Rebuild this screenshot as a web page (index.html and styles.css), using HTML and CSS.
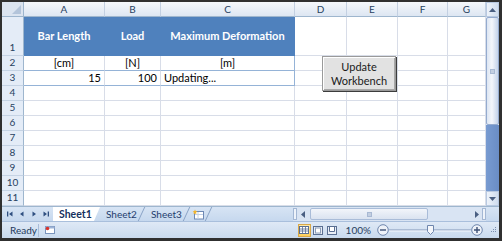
FILE: index.html
```html
<!DOCTYPE html>
<html lang="en">
<head>
    <meta charset="UTF-8">
    <title>Bar Length - Workbench</title>
    <link rel="stylesheet" href="styles.css">
</head>
<body>
    <div class="window">
        <div class="sheet-area">
            <div class="grid">
                <div class="cell hd corner"><span class="corner-tri"></span></div>
                <div class="cell hd">A</div>
                <div class="cell hd">B</div>
                <div class="cell hd">C</div>
                <div class="cell hd">D</div>
                <div class="cell hd">E</div>
                <div class="cell hd">F</div>
                <div class="cell hd">G</div>

                <div class="cell rn">1</div>
                <div class="cell title">Bar Length</div>
                <div class="cell title">Load</div>
                <div class="cell title">Maximum Deformation</div>
                <div class="cell"></div><div class="cell"></div><div class="cell"></div><div class="cell"></div>

                <div class="cell rn">2</div>
                <div class="cell unit tb">[cm]</div>
                <div class="cell unit tb">[N]</div>
                <div class="cell unit tb tr">[m]</div>
                <div class="cell"></div><div class="cell"></div><div class="cell"></div><div class="cell"></div>

                <div class="cell rn">3</div>
                <div class="cell num tb">15</div>
                <div class="cell num tb">100</div>
                <div class="cell txt tb tr">Updating...</div>
                <div class="cell"></div><div class="cell"></div><div class="cell"></div><div class="cell"></div>

                <div class="cell rn">4</div><div class="cell"></div><div class="cell"></div><div class="cell"></div><div class="cell"></div><div class="cell"></div><div class="cell"></div><div class="cell"></div>
                <div class="cell rn">5</div><div class="cell"></div><div class="cell"></div><div class="cell"></div><div class="cell"></div><div class="cell"></div><div class="cell"></div><div class="cell"></div>
                <div class="cell rn">6</div><div class="cell"></div><div class="cell"></div><div class="cell"></div><div class="cell"></div><div class="cell"></div><div class="cell"></div><div class="cell"></div>
                <div class="cell rn">7</div><div class="cell"></div><div class="cell"></div><div class="cell"></div><div class="cell"></div><div class="cell"></div><div class="cell"></div><div class="cell"></div>
                <div class="cell rn">8</div><div class="cell"></div><div class="cell"></div><div class="cell"></div><div class="cell"></div><div class="cell"></div><div class="cell"></div><div class="cell"></div>
                <div class="cell rn">9</div><div class="cell"></div><div class="cell"></div><div class="cell"></div><div class="cell"></div><div class="cell"></div><div class="cell"></div><div class="cell"></div>
                <div class="cell rn">10</div><div class="cell"></div><div class="cell"></div><div class="cell"></div><div class="cell"></div><div class="cell"></div><div class="cell"></div><div class="cell"></div>
                <div class="cell rn">11</div><div class="cell"></div><div class="cell"></div><div class="cell"></div><div class="cell"></div><div class="cell"></div><div class="cell"></div><div class="cell"></div>
            </div>

            <div class="vscroll">
                <div class="vs-btn">
                    <svg width="7" height="4" viewBox="0 0 7 4"><path d="M0 4L3.5 0 7 4z" fill="#4a5f82"/></svg>
                </div>
                <div class="vs-thumb"><span class="grip-h"></span></div>
                <div class="vs-track"></div>
                <div class="vs-btn">
                    <svg width="7" height="4" viewBox="0 0 7 4"><path d="M0 0L3.5 4 7 0z" fill="#4a5f82"/></svg>
                </div>
            </div>

            <button class="form-btn">Update<br>Workbench</button>
        </div>

        <div class="tabbar">
            <div class="tab-nav">
                <svg width="12" height="8" viewBox="0 0 12 8"><path d="M3 1.5h1.3v5H3z M5 4L8.5 1.5v5z" fill="#2f4f80"/></svg>
                <svg width="12" height="8" viewBox="0 0 12 8"><path d="M4 4L7.5 1.5v5z" fill="#2f4f80"/></svg>
                <svg width="12" height="8" viewBox="0 0 12 8"><path d="M4.5 1.5L8 4 4.5 6.5z" fill="#2f4f80"/></svg>
                <svg width="12" height="8" viewBox="0 0 12 8"><path d="M3.5 1.5L7 4 3.5 6.5z M7.7 1.5H9v5H7.7z" fill="#2f4f80"/></svg>
            </div>
            <div class="tabs">
                <div class="tab active">Sheet1</div>
                <div class="tab">Sheet2</div>
                <div class="tab">Sheet3</div>
                <div class="tab tab-new">
                    <svg width="13" height="11" viewBox="0 0 13 11">
                        <rect x="2.5" y="2.5" width="9" height="7.5" fill="#fff" stroke="#6d88b4"/>
                        <path d="M3 5.5h8M6 3v7" stroke="#c4d2e6"/>
                        <path d="M3 0.5l0.7 1.6 1.6 0.3-1.2 1.1 0.3 1.7L3 4.4l-1.4 0.8 0.3-1.7L0.7 2.4l1.6-0.3z" fill="#f3b52b"/>
                    </svg>
                </div>
            </div>
            <div class="hscroll">
                <span class="split"></span>
                <div class="hs-btn">
                    <svg width="4" height="7" viewBox="0 0 4 7"><path d="M4 0L0 3.5 4 7z" fill="#4a5f82"/></svg>
                </div>
                <div class="hs-thumb"><span class="grip-v"></span></div>
                <div class="hs-track"></div>
                <div class="hs-btn">
                    <svg width="4" height="7" viewBox="0 0 4 7"><path d="M0 0L4 3.5 0 7z" fill="#4a5f82"/></svg>
                </div>
                <span class="split"></span>
            </div>
        </div>

        <div class="statusbar">
            <span class="ready">Ready</span>
            <span class="sep"></span>
            <svg class="macro" width="12" height="10" viewBox="0 0 12 10">
                <rect x="1.5" y="1.5" width="9" height="7" fill="#fff" stroke="#7a94bd"/>
                <rect x="1.5" y="1.5" width="9" height="2" fill="#9db3d6"/>
                <circle cx="3.5" cy="3.5" r="1.8" fill="#d9342b"/>
            </svg>
            <div class="right-group">
                <div class="views">
                    <span class="view-btn on">
                        <svg width="10" height="8" viewBox="0 0 10 8">
                            <rect x="0.5" y="0.5" width="9" height="7" fill="#fff" stroke="#5a6f92"/>
                            <path d="M3.5 1v6M6.5 1v6M1 3h8M1 5h8" stroke="#5a6f92" stroke-width="0.8"/>
                        </svg>
                    </span>
                    <span class="view-btn">
                        <svg width="10" height="9" viewBox="0 0 10 9">
                            <rect x="0.5" y="0.5" width="9" height="8" fill="#e9eef6" stroke="#5a6f92"/>
                            <rect x="2.5" y="2" width="5" height="5" fill="#fff" stroke="#8c9db8"/>
                        </svg>
                    </span>
                    <span class="view-btn">
                        <svg width="10" height="9" viewBox="0 0 10 9">
                            <rect x="0.5" y="0.5" width="9" height="8" fill="#e9eef6" stroke="#5a6f92"/>
                            <path d="M2.5 1v4.5h5V1" fill="#fff" stroke="#5a6f92"/>
                        </svg>
                    </span>
                </div>
                <span class="zoom-pct">100%</span>
                <svg class="zoom-ctl" width="12" height="12" viewBox="0 0 12 12">
                    <circle cx="6" cy="6" r="5.3" fill="#eef2f8" stroke="#6e86ad"/>
                    <path d="M3 6h6" stroke="#3d5176" stroke-width="1.4"/>
                </svg>
                <svg class="slider" width="82" height="12" viewBox="0 0 82 12">
                    <path d="M0 6h82" stroke="#8197b9"/>
                    <path d="M0 7h82" stroke="#f4f7fb"/>
                    <path d="M38.5 1.5h6v6l-3 3-3-3z" fill="#f5f7fb" stroke="#6e86ad"/>
                </svg>
                <svg class="zoom-ctl" width="12" height="12" viewBox="0 0 12 12">
                    <circle cx="6" cy="6" r="5.3" fill="#eef2f8" stroke="#6e86ad"/>
                    <path d="M3 6h6M6 3v6" stroke="#3d5176" stroke-width="1.4"/>
                </svg>
                <svg class="resize" width="8" height="8" viewBox="0 0 8 8">
                    <path d="M6 1h1v1H6zM4 3h1v1H4zM6 3h1v1H6zM2 5h1v1H2zM4 5h1v1H4zM6 5h1v1H6z" fill="#7a8fb0"/>
                </svg>
            </div>
        </div>
    </div>
</body>
</html>
```

FILE: styles.css
```css
* {
    box-sizing: border-box;
}
body {
    margin: 0;
    font-family: Lato, "Liberation Sans", sans-serif;
    background-color: #fff;
}
.window {
    width: 502px;
    height: 241px;
    border-style: solid;
    border-color: #303030;
    border-width: 2px 3px 3px 2px;
    display: flex;
    flex-direction: column;
    overflow: hidden;
}
.sheet-area {
    display: flex;
    height: 204px;
    position: relative;
}
.grid {
    display: grid;
    grid-template-columns: 22px 81px 56px 134px 52px 51px 50px 38px;
    grid-template-rows: 15px 39px repeat(10, 15px);
    width: 484px;
    overflow: hidden;
}
.cell {
    border-right: 1px solid #d8dde8;
    border-bottom: 1px solid #d8dde8;
    font-size: 11px;
    line-height: 13px;
    padding: 0 3px 1px;
    display: flex;
    align-items: flex-end;
    white-space: nowrap;
    color: #000;
}
.hd {
    background: linear-gradient(#f5f8fc, #dde6f2);
    border-right-color: #c3d0e2;
    border-bottom-color: #9eb6ce;
    color: #27415f;
    font-size: 10px;
    justify-content: center;
    align-items: center;
    padding: 0;
}
.corner {
    background: #dbe4f0;
    justify-content: flex-end;
    align-items: flex-end;
    border-right-color: #9eb6ce;
    padding: 0 2px 2px 0;
}
.corner-tri {
    width: 9px;
    height: 9px;
    background-color: #b3c4da;
    clip-path: polygon(100% 0, 100% 100%, 0 100%);
}
.rn {
    background-color: #e4ecf7;
    border-right-color: #9eb6ce;
    border-bottom-color: #c5d3e4;
    color: #27415f;
    font-size: 10px;
    justify-content: center;
    padding: 0 0 1px;
}
.title {
    background-color: #4f81bd;
    border-right-color: #4f81bd;
    border-bottom-color: #4f81bd;
    color: #fff;
    font-weight: bold;
    justify-content: center;
    align-items: center;
}
.unit {
    justify-content: center;
}
.num {
    justify-content: flex-end;
}
.tb {
    border-bottom-color: #95b3d7;
}
.tr {
    border-right-color: #95b3d7;
}

/* vertical scrollbar */
.vscroll {
    width: 13px;
    display: flex;
    flex-direction: column;
    background-color: #e3ebf6;
}
.vs-btn {
    height: 15px;
    display: flex;
    justify-content: center;
    align-items: center;
    background: linear-gradient(to right, #eef3fa, #cfdcee);
    border: 1px solid #b8c9e1;
}
.vs-thumb {
    height: 108px;
    display: flex;
    justify-content: center;
    align-items: center;
    background: linear-gradient(to right, #dde6f3, #f3f6fb 45%, #c4d3ea);
    border: 1px solid #94abcf;
    border-radius: 2px;
}
.grip-h {
    width: 5px;
    height: 5px;
    background-color: #c3cfe1;
    border: 1px solid #a8b9d3;
}
.vs-track {
    flex: 1;
    background: linear-gradient(to right, #789bd1, #6a8dc5);
}

/* form control button over the sheet */
.form-btn {
    position: absolute;
    left: 320px;
    top: 54px;
    width: 74px;
    height: 35px;
    padding: 0;
    font-family: Lato, "Liberation Sans", sans-serif;
    font-size: 11px;
    line-height: 14px;
    color: #1a1a1a;
    background-color: #e2e2e2;
    border: 1px solid #9a9a9a;
    box-shadow: 1px 1px 0 #3c3c3c, inset 1px 1px 0 #fff, inset -1px -1px 0 #a8a8a8;
}

/* sheet tabs + horizontal scrollbar */
.tabbar {
    height: 15px;
    display: flex;
    background: linear-gradient(#d7e4f4, #c6d8ee);
    border-top: 1px solid #9eb6ce;
}
.tab-nav {
    width: 51px;
    display: flex;
    align-items: center;
    padding-left: 2px;
}
.tabs {
    display: flex;
    height: 100%;
}
.tab {
    position: relative;
    display: flex;
    align-items: center;
    height: 100%;
    width: 45px;
    padding-left: 6px;
    font-size: 10px;
    color: #1f3d6e;
}
.tab::after {
    content: "";
    position: absolute;
    right: 3px;
    top: 0;
    bottom: 0;
    width: 1px;
    background-color: #8aa3c6;
    transform: skewX(-25deg);
}
.tab.active {
    width: 47px;
    background-color: #fff;
    font-weight: bold;
    font-size: 10.5px;
    color: #15305c;
    clip-path: polygon(0 0, 100% 0, calc(100% - 6px) 100%, 0 100%);
}
.tab.active::after {
    display: none;
}
.tab-new {
    width: 22px;
    padding-left: 2px;
}
.hscroll {
    margin-left: auto;
    margin-right: 13px;
    width: 193px;
    display: flex;
    align-items: center;
    height: 100%;
    background-color: #d9e4f3;
}
.split {
    width: 4px;
    height: 12px;
    background-color: #eef3fa;
    border: 1px solid #a3b7d4;
}
.hs-btn {
    width: 11px;
    display: flex;
    justify-content: center;
    align-items: center;
    height: 100%;
}
.hs-thumb {
    width: 118px;
    height: 12px;
    margin-left: 2px;
    display: flex;
    justify-content: center;
    align-items: center;
    background: linear-gradient(#f2f5fa, #dae3f0);
    border: 1px solid #a9bcd8;
    border-radius: 2px;
}
.grip-v {
    width: 5px;
    height: 5px;
    background-color: #c3cfe1;
    border: 1px solid #a8b9d3;
}
.hs-track {
    flex: 1;
}

/* status bar */
.statusbar {
    flex: 1;
    display: flex;
    align-items: center;
    padding-left: 8px;
    font-size: 10px;
    color: #1e395b;
    background: linear-gradient(#dfe9f6, #c9daee);
    border-top: 1px solid #a9bfdc;
}
.ready {
    width: 26px;
}
.sep {
    width: 1px;
    height: 13px;
    margin: 0 5px 0 2px;
    background-color: #a9bcd8;
}
.right-group {
    margin-left: auto;
    display: flex;
    align-items: center;
    padding-right: 2px;
}
.views {
    display: flex;
    gap: 1px;
}
.view-btn {
    width: 13px;
    height: 13px;
    display: flex;
    justify-content: center;
    align-items: center;
}
.view-btn.on {
    background: linear-gradient(#ffe9a8, #ffd05a);
    border: 1px solid #d8a84a;
}
.zoom-pct {
    margin: 0 6px 0 7px;
    font-size: 10px;
    color: #27415f;
}
.zoom-ctl {
    display: block;
}
.slider {
    display: block;
}
.resize {
    margin-left: 6px;
}
```
